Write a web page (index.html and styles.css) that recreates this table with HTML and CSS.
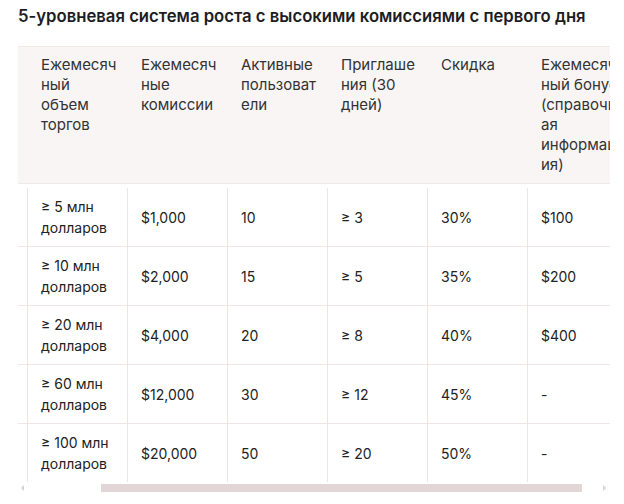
FILE: index.html
```html
<!DOCTYPE html>
<html lang="ru">
<head>
<meta charset="utf-8">
<title>Уровни</title>
<link rel="stylesheet" href="styles.css">
</head>
<body>
<div class="page">
  <h2 class="title">5-уровневая система роста с высокими комиссиями с первого дня</h2>
  <div class="scroller" id="scroller">
    <div class="tbl">
      <div class="row head">
        <div class="cell">Уровень</div>
        <div class="cell">Ежемесячный объем торгов</div>
        <div class="cell">Ежемесячные комиссии</div>
        <div class="cell">Активные пользователи</div>
        <div class="cell">Приглашения (30 дней)</div>
        <div class="cell">Скидка</div>
        <div class="cell">Ежемесячный бонус (справочная информация)</div>
      </div>
      <div class="body">
        <div class="row">
          <div class="cell">Уровень 1</div>
          <div class="cell">≥ 5 млн долларов</div>
          <div class="cell">$1,000</div>
          <div class="cell">10</div>
          <div class="cell">≥ 3</div>
          <div class="cell">30%</div>
          <div class="cell">$100</div>
        </div>
        <div class="row">
          <div class="cell">Уровень 2</div>
          <div class="cell">≥ 10 млн долларов</div>
          <div class="cell">$2,000</div>
          <div class="cell">15</div>
          <div class="cell">≥ 5</div>
          <div class="cell">35%</div>
          <div class="cell">$200</div>
        </div>
        <div class="row">
          <div class="cell">Уровень 3</div>
          <div class="cell">≥ 20 млн долларов</div>
          <div class="cell">$4,000</div>
          <div class="cell">20</div>
          <div class="cell">≥ 8</div>
          <div class="cell">40%</div>
          <div class="cell">$400</div>
        </div>
        <div class="row">
          <div class="cell">Уровень 4</div>
          <div class="cell">≥ 60 млн долларов</div>
          <div class="cell">$12,000</div>
          <div class="cell">30</div>
          <div class="cell">≥ 12</div>
          <div class="cell">45%</div>
          <div class="cell">-</div>
        </div>
        <div class="row">
          <div class="cell">Уровень 5</div>
          <div class="cell">≥ 100 млн долларов</div>
          <div class="cell">$20,000</div>
          <div class="cell">50</div>
          <div class="cell">≥ 20</div>
          <div class="cell">50%</div>
          <div class="cell">-</div>
        </div>
      </div>
    </div>
  </div>
  <div class="hbar" aria-hidden="true">
    <span class="arrow left"></span>
    <div class="track"><div class="thumb"></div></div>
    <span class="arrow right"></span>
  </div>
</div>
<script src="script.js"></script>
</body>
</html>
```

FILE: styles.css
```css
html, body {
  margin: 0;
  padding: 0;
  background: #ffffff;
}
body {
  font-family: Inter, "Noto Sans", sans-serif;
  color: #222222;
}
.page {
  padding: 4px 14px 0 18px;
}
.title {
  margin: 0;
  font-size: 16.7px;
  font-weight: 600;
  line-height: 24px;
  color: #1d1d1f;
}
.scroller {
  margin-top: 18px;
  width: 592px;
  overflow-x: auto;
  overflow-y: hidden;
  scrollbar-width: none;
}
.scroller::-webkit-scrollbar {
  display: none;
}
.tbl {
  width: 700px;
}
.row {
  display: grid;
  grid-template-columns: repeat(7, 100px);
}
.head {
  background: #f9f5f4;
  border-top: 1px solid #f1e9e8;
  border-bottom: 1px solid #f1e9e8;
  margin-bottom: 4px;
  color: #333333;
}
.head .cell {
  padding: 8px 8px 8px 14px;
  font-size: 15px;
  line-height: 20px;
  overflow-wrap: anywhere;
}
.body .row {
  border-bottom: 1px solid #f0e6e6;
}
.body .row:last-child {
  border-bottom: none;
}
.body .cell {
  display: flex;
  align-items: center;
  border-left: 1px solid #f0e4e4;
  padding: 8px 10px 8px 13px;
  font-size: 14px;
  line-height: 21px;
  min-height: 42px;
  overflow-wrap: anywhere;
}

/* custom horizontal scrollbar */
.hbar {
  width: 592px;
  height: 8px;
  margin-top: 2px;
  display: flex;
  align-items: center;
}
.arrow {
  width: 0;
  height: 0;
  border-top: 3px solid transparent;
  border-bottom: 3px solid transparent;
}
.arrow.left {
  margin-left: 3px;
  border-right: 3px solid #d9d2d2;
}
.arrow.right {
  margin-right: 4px;
  border-left: 3px solid #d9d2d2;
}
.track {
  flex: 1;
  height: 8px;
  display: flex;
}
.thumb {
  margin-left: 77px;
  width: 481px;
  height: 8px;
  background: #e2d6d6;
}
```

FILE: script.js
```js
document.getElementById('scroller').scrollLeft = 91;
```
